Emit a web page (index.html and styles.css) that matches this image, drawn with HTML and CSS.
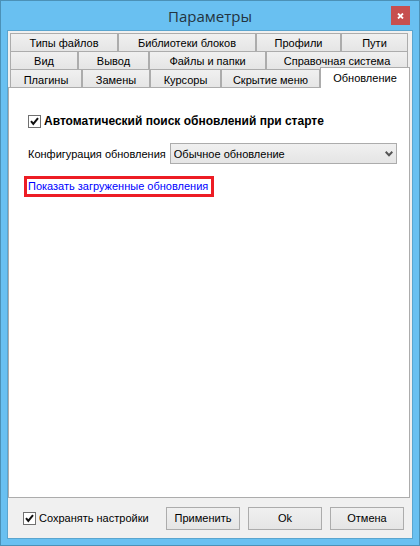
FILE: index.html
```html
<!DOCTYPE html>
<html lang="ru">
<head>
<meta charset="utf-8">
<title>Параметры</title>
<link rel="stylesheet" href="styles.css">
</head>
<body>
<div class="window">
  <header class="titlebar">
    <h1 class="title">Параметры</h1>
    <button class="close" type="button" aria-label="Закрыть">
      <svg width="7" height="6" viewBox="0 0 7 6"><path d="M1 0.5L6 5.5M6 0.5L1 5.5" stroke="#fff" stroke-width="1.8"/></svg>
    </button>
  </header>
  <main class="client">
    <div class="tabs" role="tablist">
      <div class="tab-row row-files">
        <button class="tab" role="tab" type="button">Типы файлов</button>
        <button class="tab" role="tab" type="button">Библиотеки блоков</button>
        <button class="tab" role="tab" type="button">Профили</button>
        <button class="tab" role="tab" type="button">Пути</button>
      </div>
      <div class="tab-row row-view">
        <button class="tab" role="tab" type="button">Вид</button>
        <button class="tab" role="tab" type="button">Вывод</button>
        <button class="tab" role="tab" type="button">Файлы и папки</button>
        <button class="tab" role="tab" type="button">Справочная система</button>
      </div>
      <div class="tab-row row-plugins">
        <button class="tab" role="tab" type="button">Плагины</button>
        <button class="tab" role="tab" type="button">Замены</button>
        <button class="tab" role="tab" type="button">Курсоры</button>
        <button class="tab" role="tab" type="button">Скрытие меню</button>
        <button class="tab active" role="tab" type="button" aria-selected="true">Обновление</button>
      </div>
    </div>
    <section class="panel">
      <label class="check strong">
        <span class="box"><input type="checkbox" checked><svg class="mark" viewBox="0 0 13 13"><path d="M3 6.2L5.3 9L10 3.2" fill="none" stroke="#111" stroke-width="2"/></svg></span>
        Автоматический поиск обновлений при старте
      </label>
      <div class="field">
        <label for="config">Конфигурация обновления</label>
        <div class="combo">
          <select id="config"><option>Обычное обновление</option></select>
          <svg class="arrow" width="8" height="6" viewBox="0 0 8 6"><path d="M0.7 0.8L4 4.2L7.3 0.8" fill="none" stroke="#555" stroke-width="2"/></svg>
        </div>
      </div>
      <a class="link" href="#">Показать загруженные обновления</a>
    </section>
    <footer class="actions">
      <label class="check">
        <span class="box"><input type="checkbox" checked><svg class="mark" viewBox="0 0 13 13"><path d="M3 6.2L5.3 9L10 3.2" fill="none" stroke="#111" stroke-width="2"/></svg></span>
        Сохранять настройки
      </label>
      <div class="buttons">
        <button class="button" type="button">Применить</button>
        <button class="button" type="button">Ok</button>
        <button class="button" type="button">Отмена</button>
      </div>
    </footer>
  </main>
</div>
</body>
</html>
```
FILE: styles.css
```css
* { box-sizing: border-box; }

body {
  margin: 0;
  font: 11px/14px "Liberation Sans", Arial, sans-serif;
  color: #000;
}

button, select { font: inherit; color: inherit; border-radius: 0; }

.window {
  display: flex;
  flex-direction: column;
  min-height: 100vh;
  padding: 0 6px 6px;
  background: #69c0f1;
  border: 1px solid #4b91b7;
}

.titlebar {
  display: grid;
  grid-template-columns: 22px 1fr 19px;
  height: 29px;
  padding: 0 3px 0 0;
}

.title {
  grid-column: 2;
  margin: 0;
  font: 15px/30px "Open Sans", "Noto Sans", sans-serif;
  color: #243440;
  text-align: center;
}

.close {
  display: grid;
  place-items: center;
  height: 19px;
  margin-top: 5px;
  padding: 0;
  background: #c75050;
  border: 0;
}

.client {
  flex: 1;
  display: flex;
  flex-direction: column;
  padding: 2px 2px 0 0;
  background: #f0f0f0;
  border: 1px solid #5aa5cf;
}

.tabs { padding: 0 0 0 2px; }

.tab-row {
  display: grid;
  height: 18px;
  margin-right: 2px;
}

.row-files { grid-template-columns: 108fr 138fr 85fr 67fr; }
.row-view { grid-template-columns: 68fr 71fr 117fr 142fr; }
.row-plugins { grid-template-columns: 72fr 68fr 71fr 99fr 90fr; margin-right: 0; }

.tab {
  min-width: 0;
  padding: 1px 0 0;
  line-height: 16px;
  white-space: nowrap;
  background: linear-gradient(#f0f0f0, #e5e5e5);
  border: 1px solid #acacac;
  border-bottom: 0;
}

.tab.active {
  z-index: 1;
  height: 21px;
  margin-top: -2px;
  padding-bottom: 2px;
  background: #fff;
}

.panel {
  flex: 1;
  display: flex;
  flex-direction: column;
  align-items: flex-start;
  padding: 25px 12px 0 15px;
  background: #fff;
  border: 1px solid #acacac;
}

.check { display: flex; align-items: center; gap: 3px; white-space: nowrap; }
.strong { padding-left: 4px; font-size: 12px; line-height: 16px; font-weight: bold; }

.box { display: grid; width: 13px; height: 13px; }
.box > * { grid-area: 1 / 1; }
.box input {
  appearance: none;
  width: 13px;
  height: 13px;
  margin: 0;
  background: #fff;
  border: 1px solid #707070;
}
.mark { width: 13px; height: 13px; pointer-events: none; z-index: 1; visibility: hidden; }
.box input:checked + .mark { visibility: visible; }

.field {
  align-self: stretch;
  display: flex;
  align-items: center;
  gap: 4px;
  margin-top: 14px;
  padding-left: 4px;
  white-space: nowrap;
}

.combo { flex: 1; display: grid; align-items: center; }
.combo > * { grid-area: 1 / 1; }
.combo select {
  appearance: none;
  width: 100%;
  height: 21px;
  padding: 0 3px;
  background: linear-gradient(#f0f0f0, #e5e5e5);
  border: 1px solid #acacac;
}
.arrow { justify-self: end; margin-right: 4px; pointer-events: none; }

.link {
  margin-top: 12px;
  padding: 0 3px 0 1px;
  line-height: 15px;
  color: #00f;
  text-decoration: none;
  white-space: nowrap;
  border: 3px solid #ed1c24;
}

.actions {
  display: flex;
  align-items: center;
  justify-content: space-between;
  height: 40px;
  padding: 0 6px 0 15px;
}

.buttons { display: flex; gap: 8px; }

.button {
  width: 74px;
  height: 23px;
  padding: 0;
  background: linear-gradient(#f0f0f0, #e5e5e5);
  border: 1px solid #acacac;
}
```
